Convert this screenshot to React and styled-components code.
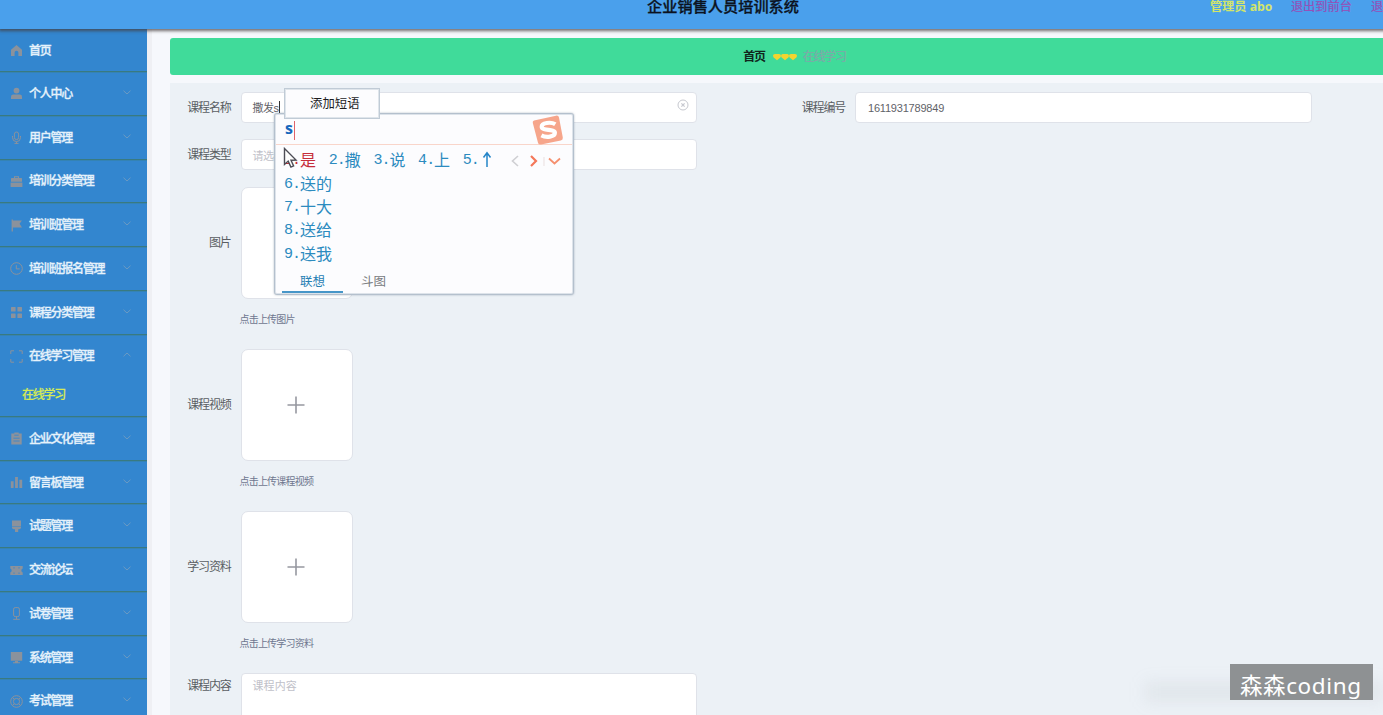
import React from "react";
import styled, { createGlobalStyle, css } from "styled-components";

const GlobalStyle = createGlobalStyle`
  * { box-sizing: border-box; }
  body {
    margin: 0;
    background: #f6f8fc;
    font-family: "Liberation Sans", "Noto Sans CJK SC", sans-serif;
    overflow: hidden;
  }
`;

const Page = styled.div`
  width: 100vw;
  height: 715px;
  overflow: hidden;
  display: flex;
  flex-direction: column;
  position: relative;
`;

const Header = styled.header`
  flex: none;
  width: 1446px;
  height: 29px;
  display: grid;
  grid-template-columns: 1fr auto 1fr;
  background: #4aa0ec;
  box-shadow: 0 1px 3px 1px rgba(70, 60, 60, 0.75);
  position: relative;
  z-index: 2;
  line-height: 14px;
  white-space: nowrap;
`;

const Title = styled.h1`
  grid-column: 2;
  margin: 0;
  font-size: 15.2px;
  line-height: 14px;
  font-weight: 500;
  color: #0b1220;
  -webkit-text-stroke: 0.3px #0b1220;
`;

const Account = styled.div`
  display: flex;
  justify-content: flex-start;
  gap: 18px;
  padding-left: 411px;
  font-size: 12.2px;
`;

const UserName = styled.span`
  width: 63px;
  color: #d3e56a;
  font-weight: 700;
  font-family: "Open Sans", "Noto Sans CJK SC", sans-serif;
`;

const HeaderLink = styled.span`
  width: 62px;
  color: #9550b8;
  -webkit-text-stroke: 0.2px #9550b8;
`;

const Body = styled.div`
  flex: 1;
  min-height: 0;
  display: flex;
`;

const Sidebar = styled.nav`
  flex: none;
  width: 147px;
  background: #3386cf;
  overflow: hidden;
`;

const MenuGroup = styled.div`
  border-bottom: 1px solid #397a80;
  box-shadow: 0 1px 0 rgba(57, 125, 128, 0.35);
`;

const MenuItem = styled.div`
  height: ${(p) => (p.$first ? "42px" : "42.75px")};
  display: flex;
  align-items: center;
  padding: 1px 16px 0 10px;
`;

const MenuIcon = styled.svg`
  flex: none;
  width: 13px;
  height: 13px;
  margin-right: 6px;
  color: #8b929c;
`;

const MenuLabel = styled.span`
  flex: 1;
  font-size: 12px;
  line-height: 16px;
  letter-spacing: -1.25px;
  font-weight: 500;
  color: #e6f2fb;
  -webkit-text-stroke: 0.3px #e6f2fb;
  white-space: nowrap;
`;

const Chevron = styled.svg`
  width: 8px;
  height: 5px;
  margin-bottom: 3px;
  color: #6b9ac3;
  transform: ${(p) => (p.$open ? "rotate(180deg)" : "none")};
`;

const SubItem = styled.div`
  height: 38.7px;
  padding: 10px 0 0 22px;
  font-size: 12px;
  line-height: 16px;
  letter-spacing: -1.25px;
  font-weight: 500;
  color: #d6ea56;
  -webkit-text-stroke: 0.2px #d6ea56;
`;

const Main = styled.main`
  flex: none;
  width: 1273px;
  margin-left: 5px;
  padding: 9px 0 0 18px;
  box-shadow: -5px 0 0 #eff0f4;
  display: flex;
  flex-direction: column;
`;

const Breadcrumb = styled.div`
  flex: none;
  height: 37px;
  padding-right: 6px;
  display: flex;
  align-items: center;
  justify-content: center;
  border-radius: 3px;
  background: #40db9a;
  font-size: 12px;
  letter-spacing: -1.25px;
  line-height: 16px;
`;

const Home = styled.span`
  color: #10261d;
  font-weight: 700;
`;

const Hearts = styled.svg`
  width: 24px;
  height: 8px;
  margin: 0 6px 0 8px;
`;

const Current = styled.span`
  color: #7ea9a9;
  -webkit-text-stroke: 0.2px #7ea9a9;
`;

const Form = styled.form`
  flex: 1;
  margin-top: 8px;
  padding: 9px 0 0 10px;
  background: #ecf1f6;
  display: flex;
  flex-direction: column;
`;

const Row = styled.div`
  display: flex;
  flex: none;
  margin-bottom: ${(p) => p.$gap}px;
`;

const Field = styled.div`
  display: flex;
  width: 614.5px;
`;

const Label = styled.label`
  flex: none;
  width: 51px;
  margin-right: 9.5px;
  padding-right: 0.5px;
  text-align: right;
  height: ${(p) => p.$h || 32}px;
  line-height: ${(p) => p.$h || 32}px;
  margin-bottom: -3px;
  font-size: 12px;
  letter-spacing: -1.2px;
  color: #5a5e63;
  white-space: nowrap;
`;

const box = css`
  background: #fff;
  border: 1px solid #dfe2e9;
`;

const Input = styled.div`
  ${box}
  width: 456.5px;
  height: 31px;
  border-radius: 4px;
  padding: 0 7px 0 ${(p) => (p.$number ? 12 : 11)}px;
  display: flex;
  align-items: center;
  justify-content: space-between;
  font-size: 11px;
  letter-spacing: ${(p) => (p.$number ? "-0.2px" : "-0.5px")};
  color: ${(p) => (p.$muted ? "#bfc1c9" : "#5f6268")};
`;

const Typed = styled.span`
  border-right: 1px solid #333;
  line-height: 14px;
`;

const ClearIcon = styled.svg`
  width: 12px;
  height: 12px;
  margin-bottom: 5px;
`;

const Upload = styled.div`
  display: flex;
  flex-direction: column;
`;

const UploadBox = styled.div`
  ${box}
  width: 112px;
  height: 112px;
  border-radius: 7px;
  display: flex;
  align-items: center;
  justify-content: center;
`;

const Plus = styled.svg`
  width: 18px;
  height: 18px;
  margin: 0 1px 1px 0;
`;

const Tip = styled.span`
  margin: 13px 0 0 -1px;
  height: 15px;
  line-height: 15px;
  font-size: 10px;
  letter-spacing: -0.8px;
  color: #6f778f;
`;

const TextArea = styled(Input)`
  height: 80px;
  align-items: flex-start;
  padding-top: 5px;
  letter-spacing: 0.1px;
  line-height: 14px;
`;

const Ime = styled.section`
  position: absolute;
  left: 274px;
  top: 113px;
  width: 300px;
  height: 182px;
  z-index: 3;
  background: #fcfcfe;
  border: 1px solid #b4c0cd;
  border-radius: 3px;
  box-shadow: 0 0 2px rgba(90, 110, 130, 0.5), inset 0 0 0 1px #dde3ea;
  display: flex;
  flex-direction: column;
  padding: 1px;
`;

const Composition = styled.div`
  flex: none;
  height: 30px;
  display: flex;
  align-items: center;
  padding: 0 8px 0 9px;
  border-bottom: 1px solid #f9d5ca;
`;

const Letter = styled.span`
  flex: 1;
  font: 700 16px/18px "Open Sans", sans-serif;
  color: #1768bd;
`;

const Caret = styled.i`
  display: inline-block;
  width: 1.5px;
  height: 19px;
  margin-left: 1px;
  background: #e0646a;
  vertical-align: middle;
`;

const SogouLogo = styled.svg`
  flex: none;
  width: 32px;
  height: 32px;
`;

const FirstLine = styled.div`
  flex: none;
  height: 28px;
  padding: 2px 9px 0 8px;
  display: flex;
  align-items: center;
`;

const Candidate = styled.span`
  display: inline-flex;
  align-items: center;
  margin-right: 12.7px;
  height: 23.4px;
  font: 16px/23px "Noto Sans CJK SC", sans-serif;
  color: ${(p) => (p.$active ? "#c62e3b" : "#2c8bbf")};
  white-space: nowrap;
`;

const Index = styled.span`
  width: 16px;
  padding-top: 2px;
  font: 15px/21px "Liberation Mono", monospace;
  letter-spacing: -1px;
`;

const Arrows = styled.svg`
  flex: none;
  width: 52px;
  height: 14px;
  margin: 2px 2px 0 auto;
`;

const More = styled.div`
  flex: none;
  display: flex;
  flex-direction: column;
  margin-top: -1.5px;
  padding-left: 8px;
`;

const Tabs = styled.div`
  margin-top: auto;
  padding-left: 6px;
  display: flex;
`;

const Tab = styled.span`
  width: 61px;
  height: 24px;
  text-align: center;
  font-size: 12.5px;
  line-height: 26px;
  color: ${(p) => (p.$active ? "#2680b4" : "#77797d")};
  border-bottom: 2px solid ${(p) => (p.$active ? "#4796c8" : "transparent")};
`;

const PhraseMenu = styled.div`
  position: absolute;
  left: 284px;
  top: 88px;
  width: 96px;
  height: 31px;
  z-index: 4;
  padding-left: 25px;
  background: #fcfcfe;
  border: 1px solid #c0cbd6;
  box-shadow: inset 0 0 0 1px #dfe5eb;
  font-size: 12.4px;
  line-height: 30px;
  color: #1c1c1e;
`;

const Pointer = styled.svg`
  position: absolute;
  left: 283px;
  top: 147px;
  width: 15px;
  height: 22px;
  z-index: 5;
`;

const Watermark = styled.div`
  position: absolute;
  left: 1230px;
  top: 664px;
  width: 143px;
  height: 36px;
  z-index: 4;
  padding-left: 10px;
  background: #8e9193;
  color: #fff;
  font: 22.5px/44px "Noto Sans", "Noto Sans CJK SC", sans-serif;
  letter-spacing: 0.6px;
  white-space: nowrap;
`;

const Smudge = styled.div`
  position: absolute;
  left: 1145px;
  top: 682px;
  width: 238px;
  height: 20px;
  z-index: 3;
  background: rgba(150, 155, 165, 0.12);
  filter: blur(8px);
`;

const line = { fill: "none", stroke: "currentColor", strokeWidth: 1 };

const icons = {
  home: <path d="M6.5 1 12 5.8V12H8.4V8.6a1.9 1.9 0 0 0-3.8 0V12H1V5.8z" fill="currentColor" />,
  user: (
    <g fill="currentColor">
      <circle cx="6.5" cy="3.6" r="2.9" />
      <path d="M1 12V9.8Q1 7.6 3.3 7.6h6.4Q12 7.6 12 9.8V12z" />
    </g>
  ),
  mic: (
    <g {...line}>
      <rect x="4.4" y="1" width="4.2" height="7.6" rx="2.1" />
      <path d="M2.5 5v1.6a4 4 0 0 0 8 0V5M6.5 10.6v2M4.5 12.4h4" />
    </g>
  ),
  briefcase: (
    <g fill="currentColor">
      <path d="M4 3V1.3h5V3h2.3q.7 0 .7.7v3.1H1V3.7q0-.7.7-.7zM5 3h3v-.8H5z" fillRule="evenodd" />
      <path d="M.6 7.6h11.8V12H.6z" />
    </g>
  ),
  flag: <path d="M1.6.5h1.3v1h9L9.6 4.7 12 8.5H2.9v4H1.6z" fill="currentColor" />,
  clock: (
    <g {...line}>
      <circle cx="6.5" cy="6.5" r="5.8" />
      <path d="M6.3 3.2v3.7h3.4" />
    </g>
  ),
  grid: (
    <g fill="currentColor">
      <rect x="1" y="1" width="4.6" height="4.6" rx=".5" />
      <rect x="7.4" y="1" width="4.6" height="4.6" rx=".5" />
      <rect x="1" y="7.4" width="4.6" height="4.6" rx=".5" />
      <rect x="7.4" y="7.4" width="4.6" height="4.6" rx=".5" />
    </g>
  ),
  expand: <path {...line} d="M.8 4V.8H4M9 .8h3.2V4M12.2 9v3.2H9M4 12.2H.8V9" />,
  clipboard: (
    <g>
      <path d="M1.3 1.6h3V.4h4.4v1.2h3v11H1.3z" fill="currentColor" />
      <path d="M4.3 3.2h4.4M3.4 6.2h6.2M3.4 9h6.2" stroke="#3386cf" strokeWidth=".8" />
    </g>
  ),
  bars: <path d="M.8 5.3h2.8V12H.8zM5.1 1h2.8v11H5.1zM9.4 3.8h2.8V12H9.4z" fill="currentColor" />,
  brush: <path d="M2 .4h9v6.1H2zM2 7.100h9V8.200L9.400 9.300H8.200V12H5V9.300H3.600L2 8.200z" fill="currentColor" />,
  ticket: (
    <g>
      <path d="M.3 2h12.4v2.6a2 2 0 0 0 0 3.8V11H.3V8.4a2 2 0 0 0 0-3.8z" fill="currentColor" />
      <path d="M4 3v1.6M4 8.4V10M9 3v1.6M9 8.4V10" stroke="#3386cf" strokeWidth=".8" />
    </g>
  ),
  phone: (
    <g {...line}>
      <rect x="3.6" y=".6" width="5.8" height="9" rx="1.6" />
      <path d="M6.5 9.6v2.6M3.2 12.3h6.6" />
    </g>
  ),
  monitor: <path d="M.8 1h11.4v8.7H.8zM5 10h3v1.3h2v1H3v-1h2z" fill="currentColor" />,
  help: (
    <g {...line}>
      <circle cx="6.5" cy="6.5" r="5.8" />
      <circle cx="6.5" cy="6.5" r="3.1" />
      <path d="m2.4 2.4 1.9 1.9m4.4 4.4 1.9 1.9m0-8.2L8.7 4.3M4.3 8.7l-1.9 1.9" />
    </g>
  ),
};

const menu = [
  { label: "首页", icon: "home", leaf: true },
  { label: "个人中心", icon: "user" },
  { label: "用户管理", icon: "mic" },
  { label: "培训分类管理", icon: "briefcase" },
  { label: "培训班管理", icon: "flag" },
  { label: "培训班报名管理", icon: "clock" },
  { label: "课程分类管理", icon: "grid" },
  { label: "在线学习管理", icon: "expand", child: "在线学习" },
  { label: "企业文化管理", icon: "clipboard" },
  { label: "留言板管理", icon: "bars" },
  { label: "试题管理", icon: "brush" },
  { label: "交流论坛", icon: "ticket" },
  { label: "试卷管理", icon: "phone" },
  { label: "系统管理", icon: "monitor" },
  { label: "考试管理", icon: "help" },
];

const inline = ["撒", "说", "上"];
const stacked = ["送的", "十大", "送给", "送我"];

function UploadField({ label, tip }) {
  return (
    <Row $gap={22}>
      <Label $h={112}>{label}</Label>
      <Upload>
        <UploadBox>
          <Plus viewBox="0 0 18 18">
            <path d="M9 .5v17M.5 9h17" stroke="#9698a0" strokeWidth="1.6" />
          </Plus>
        </UploadBox>
        <Tip>{tip}</Tip>
      </Upload>
    </Row>
  );
}

export default function App() {
  return (
    <Page>
      <GlobalStyle />
      <Header>
        <Title>企业销售人员培训系统</Title>
        <Account>
          <UserName>管理员 abo</UserName>
          <HeaderLink>退出到前台</HeaderLink>
          <HeaderLink>退出登录</HeaderLink>
        </Account>
      </Header>
      <Body>
        <Sidebar>
          {menu.map((m) => (
            <MenuGroup key={m.label}>
              <MenuItem $first={m.leaf}>
                <MenuIcon viewBox="0 0 13 13">{icons[m.icon]}</MenuIcon>
                <MenuLabel>{m.label}</MenuLabel>
                {!m.leaf && (
                  <Chevron $open={Boolean(m.child)} viewBox="0 0 8 5">
                    <path d="m.5.7 3.5 3.3L7.5.7" {...line} />
                  </Chevron>
                )}
              </MenuItem>
              {m.child && <SubItem>{m.child}</SubItem>}
            </MenuGroup>
          ))}
        </Sidebar>
        <Main>
          <Breadcrumb>
            <Home>首页</Home>
            <Hearts viewBox="0 0 24 8">
              {[0, 8, 16].map((x) => (
                <path
                  key={x}
                  transform={`translate(${x} 0)`}
                  d="M4 7.200.7 4.400C-.600 3 .100 1 2 1h4c1.900 0 2.600 2 1.300 3.400z"
                  fill="#f3d42f"
                />
              ))}
            </Hearts>
            <Current>在线学习</Current>
          </Breadcrumb>
          <Form>
            <Row $gap={16}>
              <Field>
                <Label>课程名称</Label>
                <Input>
                  <Typed>撒发s</Typed>
                  <ClearIcon viewBox="0 0 12 12">
                    <circle cx="6" cy="6" r="5" fill="none" stroke="#c6c8cf" />
                    <path d="m4.400 4.400 3.200 3.200m0-3.200L4.400 7.600" stroke="#c6c8cf" strokeWidth="1.200" />
                  </ClearIcon>
                </Input>
              </Field>
              <Field>
                <Label>课程编号</Label>
                <Input $number>1611931789849</Input>
              </Field>
            </Row>
            <Row $gap={17}>
              <Label>课程类型</Label>
              <Input $muted>请选择课程类型</Input>
            </Row>
            <UploadField label="图片" tip="点击上传图片" />
            <UploadField label="课程视频" tip="点击上传课程视频" />
            <UploadField label="学习资料" tip="点击上传学习资料" />
            <Row $gap={0}>
              <Label $h={27}>课程内容</Label>
              <TextArea $muted>课程内容</TextArea>
            </Row>
          </Form>
        </Main>
      </Body>

      <Ime>
        <Composition>
          <Letter>
            s<Caret />
          </Letter>
          <SogouLogo viewBox="0 0 32 32">
            <path d="m2 6.500 22-4.800q2.500-.500 3 1.700l3.800 20q.400 2.400-2 3L9 30.500q-2.400.500-3-1.800L.8 9q-.500-2 1.200-2.500z" fill="#f6a58b" />
            <path
              d="M23.300 10.300C19 7.600 9.500 8.600 9.700 12.800c.200 4.300 13.200 1.800 13.200 6 0 4.200-8.700 5.100-13.500 2.600"
              fill="none"
              stroke="#fff"
              strokeWidth="4.200"
            />
          </SogouLogo>
        </Composition>
        <FirstLine>
          <Candidate $active>
            <Index>1.</Index>是
          </Candidate>
          {inline.map((c, i) => (
            <Candidate key={c}>
              <Index>{i + 2}.</Index>
              {c}
            </Candidate>
          ))}
          <Candidate>
            <Index>5.</Index>
            <svg width="16" height="17" viewBox="0 0 16 17">
              <path d="M8 16V2M4.500 6.500 8 1.800l3.500 4.700" fill="none" stroke="#2585c8" strokeWidth="1.500" />
            </svg>
          </Candidate>
          <Arrows viewBox="0 0 52 14">
            <path d="M9 2 3.500 7 9 12" fill="none" stroke="#cfcfd3" strokeWidth="1.600" />
            <path d="m22 2 5 5-5 5" fill="none" stroke="#f4775a" strokeWidth="2.200" />
            <path d="M35 3v9" stroke="#eadfdf" />
            <path d="m40 4.500 5.500 5 5.500-5" fill="none" stroke="#f5906f" strokeWidth="1.800" />
          </Arrows>
        </FirstLine>
        <More>
          {stacked.map((c, i) => (
            <Candidate key={c}>
              <Index>{i + 6}.</Index>
              {c}
            </Candidate>
          ))}
        </More>
        <Tabs>
          <Tab $active>联想</Tab>
          <Tab>斗图</Tab>
        </Tabs>
      </Ime>
      <PhraseMenu>添加短语</PhraseMenu>
      <Pointer viewBox="0 0 15 22">
        <path d="M1.500 1.500v16l3.700-3.400 2.700 6 2.700-1.200-2.600-5.700 5-.200z" fill="#fdfdfd" stroke="#4c4c55" strokeWidth="1.400" />
      </Pointer>
      <Smudge />
      <Watermark>森森coding</Watermark>
    </Page>
  );
}
